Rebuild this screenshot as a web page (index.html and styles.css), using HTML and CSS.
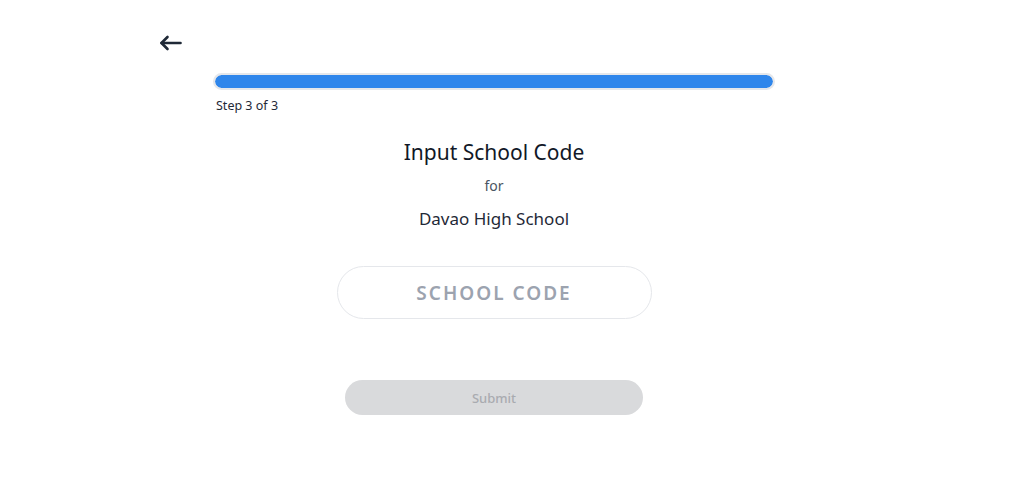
FILE: index.html
```html
<!DOCTYPE html>
<html lang="en">
<head>
<meta charset="utf-8">
<title>Input School Code</title>
<link rel="stylesheet" href="styles.css">
</head>
<body>
<div class="page">
  <div class="topbar">
    <button class="back" aria-label="Back">
      <svg width="24" height="16" viewBox="0 0 24 16" fill="none" stroke="#1f2937" stroke-width="2.6" stroke-linecap="round" stroke-linejoin="round">
        <path d="M21.5 8H2.5"/>
        <path d="M8.5 2L2.5 8l6 6"/>
      </svg>
    </button>
  </div>
  <div class="progress-wrap">
    <div class="progress"><div class="progress-fill"></div></div>
    <div class="step">Step 3 of 3</div>
  </div>
  <div class="content">
    <h1 class="title">Input School Code</h1>
    <div class="for">for</div>
    <div class="school">Davao High School</div>
    <input class="code" type="text" placeholder="SCHOOL CODE">
    <button class="submit" disabled>Submit</button>
  </div>
</div>
</body>
</html>
```
FILE: styles.css
```css
* { box-sizing: border-box; }
html, body { margin: 0; padding: 0; background: #fff; }
body {
  font-family: "Noto Sans", "Open Sans", "DejaVu Sans", sans-serif;
  color: #1f2937;
}
.page {
  width: 988px;
  display: flex;
  flex-direction: column;
  align-items: center;
}
.topbar {
  width: 670px;
  padding-top: 35px;
  height: 60px;
}
.back {
  border: 0;
  background: none;
  padding: 0;
  margin-left: 0;
  width: 24px;
  height: 16px;
  display: block;
  cursor: pointer;
}
.back svg { display: block; }
.progress-wrap {
  width: 562px;
  margin-top: 13px;
}
.progress {
  height: 17px;
  border: 2px solid #e5e7eb;
  border-radius: 9px;
  background: #e5e7eb;
  overflow: hidden;
}
.progress-fill {
  width: 100%;
  height: 100%;
  background: #2f86eb;
  border-radius: 7px;
}
.step {
  font-size: 12.5px;
  margin-top: 8px;
  margin-left: 3px;
  color: #1f2937;
  line-height: 16px;
}
.content {
  display: flex;
  flex-direction: column;
  align-items: center;
}
.title {
  margin: 23px 0 0;
  font-size: 21px;
  font-weight: 400;
  line-height: 30px;
  color: #111827;
}
.for {
  margin-top: 9px;
  font-size: 14px;
  line-height: 20px;
  color: #4b5563;
}
.school {
  margin-top: 11px;
  font-size: 17px;
  font-weight: 400;
  line-height: 24px;
  color: #1f2937;
}
.code {
  margin-top: 35px;
  width: 315px;
  height: 53px;
  border: 1px solid #e5e7eb;
  border-radius: 27px;
  text-align: center;
  font-family: inherit;
  font-size: 19px;
  font-weight: 600;
  letter-spacing: 2px;
  color: #374151;
  outline: none;
  background: #fff;
}
.code::placeholder { color: #9ca3af; }
.submit {
  margin-top: 61px;
  width: 298px;
  height: 35px;
  border: 0;
  border-radius: 18px;
  background: #d9dadc;
  color: #a9abb0;
  font-family: inherit;
  font-size: 13px;
  font-weight: 500;
}
```
